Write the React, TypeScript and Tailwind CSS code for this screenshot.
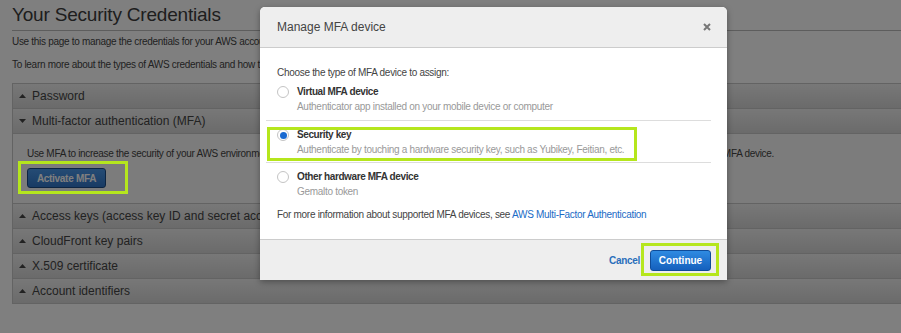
import React from 'react';

const font = { fontFamily: '"Liberation Sans", Arial, sans-serif' };

const Caret: React.FC<{ open?: boolean }> = ({ open }) => (
  <svg width="7" height="4" viewBox="0 0 7 4" className="shrink-0">
    {open ? <path d="M0 0 L7 0 L3.5 4 Z" fill="#444" /> : <path d="M0 4 L7 4 L3.5 0 Z" fill="#444" />}
  </svg>
);

const Row: React.FC<{ label: string; open?: boolean }> = ({ label, open }) => (
  <div className="h-[25px] flex items-center gap-[6px] pl-[6px] border-t border-[#c6c6c6] bg-gradient-to-b from-[#f0f0f0] to-[#d6d6d6] text-[12px] text-[#444] whitespace-nowrap">
    <Caret open={open} />
    <span>{label}</span>
  </div>
);

const Radio: React.FC<{ checked?: boolean }> = ({ checked }) => (
  <span className="w-[12px] h-[12px] rounded-full border border-[#c4c4c4] bg-white flex items-center justify-center shrink-0 mt-[1px]">
    {checked && <span className="w-[7px] h-[7px] rounded-full bg-[#1a6ad1]" />}
  </span>
);

const Option: React.FC<{ title: string; desc: string; checked?: boolean; border?: boolean; pt: string; pb: string }> = ({
  title,
  desc,
  checked,
  border,
  pt,
  pb,
}) => (
  <div className={`${pt} ${pb} pl-[11px] ${border ? 'border-b border-[#dddddd]' : ''}`}>
    <div className="flex items-start gap-[8px]">
      <Radio checked={checked} />
      <div className="leading-[14px]">
        <div className="font-bold text-[#333] tracking-[-0.4px]">{title}</div>
        <div className="text-[#999] mt-[1px]">{desc}</div>
      </div>
    </div>
  </div>
);

export default function App() {
  return (
    <div className="relative w-[901px] h-[333px] overflow-hidden bg-white text-[10px] tracking-[-0.3px]" style={font}>
      {/* Page */}
      <div className="pl-[12px]">
        <h1 className="pt-[3px] pb-[3px] text-[19px] tracking-[-0.2px] leading-[24px] text-[#3c3c3c] border-b border-[#bbbbbb]">
          Your Security Credentials
        </h1>
        <p className="mt-[4px] leading-[14px] text-[#444]">
          Use this page to manage the credentials for your AWS account. To manage credentials for IAM users, use the IAM Console.
        </p>
        <p className="mt-[9px] leading-[14px] text-[#444]">
          To learn more about the types of AWS credentials and how they're used, see AWS Security Credentials in AWS General Reference.
        </p>
        <div className="mt-[11px] border-l border-b border-[#c6c6c6] tracking-normal">
          <Row label="Password" />
          <Row label="Multi-factor authentication (MFA)" open />
          <div className="h-[70px] border-t border-[#c6c6c6] bg-[#f8f8f8] pl-[14px] pt-[13px] tracking-[-0.3px]">
            <p className="leading-[14px] text-[#444] whitespace-nowrap">
              Use MFA to increase the security of your AWS environment. Signing in to MFA-protected accounts requires a user name, password, and an authentication code from an MFA device.
            </p>
            <button className="mt-[7px] h-[20px] w-[79px] rounded-[3px] border border-[#1a4a84] bg-gradient-to-b from-[#4a98ea] to-[#3176c8] text-white font-bold text-[10px]">
              Activate MFA
            </button>
          </div>
          <Row label="Access keys (access key ID and secret access key)" />
          <Row label="CloudFront key pairs" />
          <Row label="X.509 certificate" />
          <Row label="Account identifiers" />
        </div>
      </div>

      {/* Dim overlay */}
      <div className="absolute inset-0 bg-black/50" />

      {/* Highlight on Activate MFA */}
      <div className="absolute left-[18px] top-[161px] w-[110px] h-[33px] border-[3px] border-[#b5e61d]" />

      {/* Modal */}
      <div className="absolute left-[260px] top-[7px] w-[467px] h-[273px] bg-white rounded-t-[5px] shadow-[0_2px_6px_rgba(0,0,0,0.35)] flex flex-col">
        <div className="h-[41px] shrink-0 flex items-center justify-between pl-[17px] pr-[16px] bg-[#eeeeee] rounded-t-[5px] border-b border-[#cccccc]">
          <span className="text-[12px] tracking-normal text-[#444]">Manage MFA device</span>
          <svg width="8" height="8" viewBox="0 0 8 8">
            <path d="M1 1 L7 7 M7 1 L1 7" stroke="#777" strokeWidth="2" />
          </svg>
        </div>
        <div className="flex-1 pl-[6px] pr-[16px]">
          <p className="mt-[18px] pl-[11px] leading-[14px] text-[#444]">Choose the type of MFA device to assign:</p>
          <Option
            title="Virtual MFA device"
            desc="Authenticator app installed on your mobile device or computer"
            border
            pt="pt-[5px]"
            pb="pb-[6px]"
          />
          <Option
            title="Security key"
            desc="Authenticate by touching a hardware security key, such as Yubikey, Feitian, etc."
            checked
            border
            pt="pt-[7px]"
            pb="pb-[5px]"
          />
          <Option title="Other hardware MFA device" desc="Gemalto token" pt="pt-[7px]" pb="pb-0" />
          <p className="mt-[9px] pl-[11px] leading-[14px] text-[#444]">
            For more information about supported MFA devices, see{' '}
            <span className="text-[#1a6bc6]">AWS Multi-Factor Authentication</span>
          </p>
        </div>
        <div className="h-[41px] shrink-0 flex items-center justify-end gap-[10px] pr-[16px] bg-[#eeeeee] border-t border-[#cccccc]">
          <span className="text-[#2a6ebb] font-bold">Cancel</span>
          <button className="h-[21px] w-[61px] rounded-[3px] border border-[#0f4c99] bg-gradient-to-b from-[#2f8be2] to-[#1560bd] text-white font-bold text-[10px] tracking-normal">
            Continue
          </button>
        </div>
      </div>

      {/* Highlight on Security key */}
      <div className="absolute left-[267px] top-[127px] w-[370px] h-[34px] border-[3px] border-[#b5e61d]" />

      {/* Highlight on Continue */}
      <div className="absolute left-[641px] top-[243px] w-[78px] h-[33px] border-[3px] border-[#b5e61d]" />
    </div>
  );
}
